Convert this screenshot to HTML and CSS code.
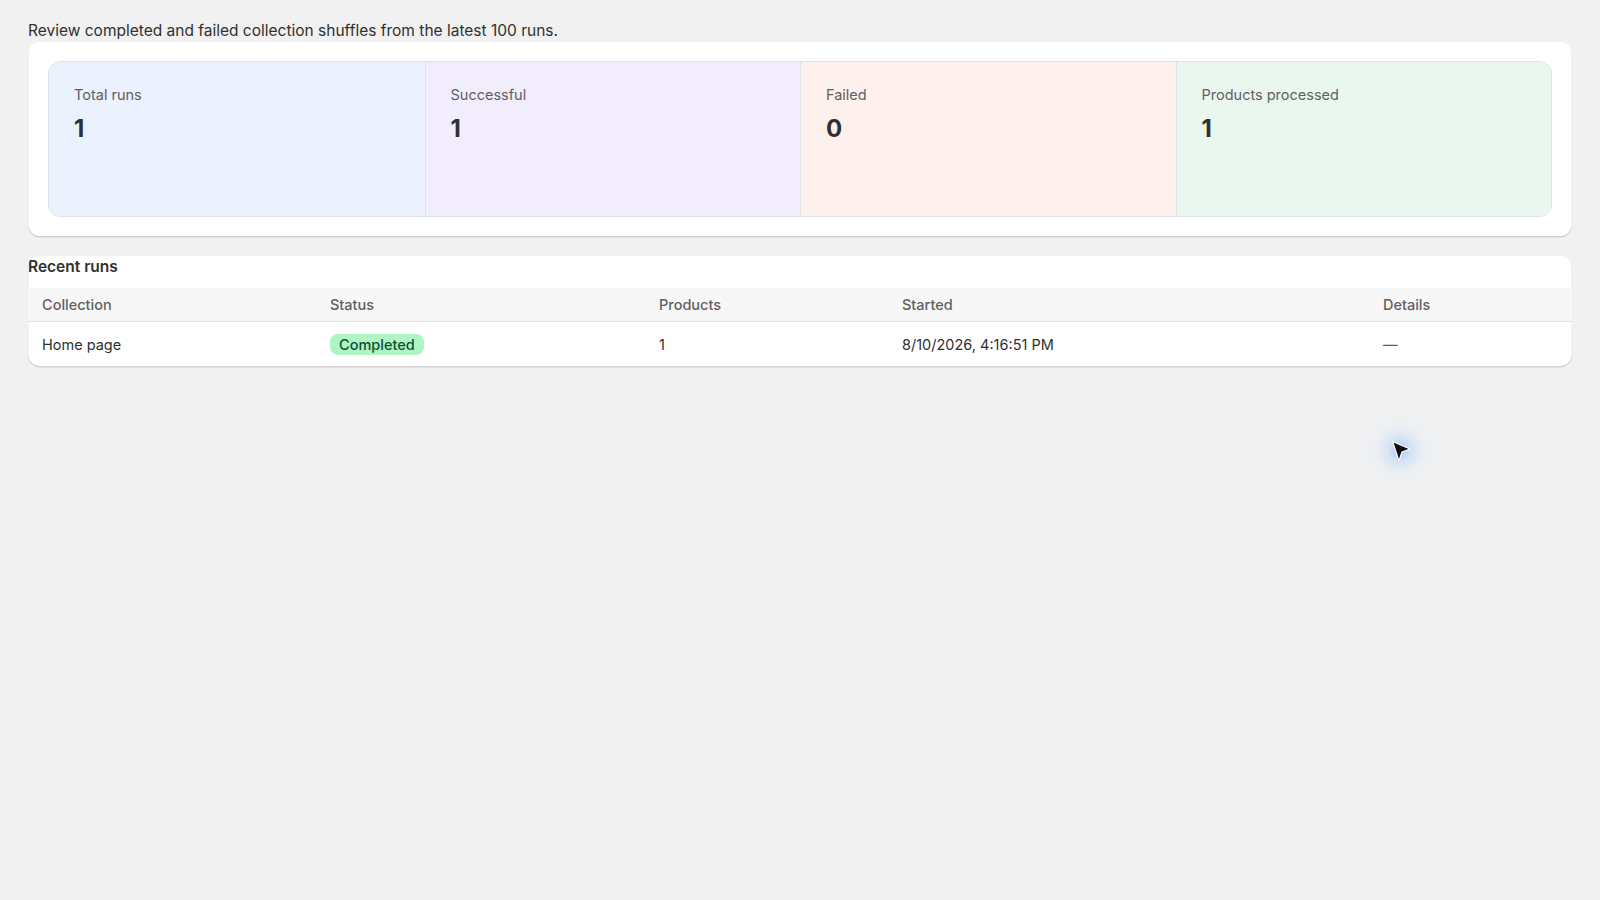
FILE: index.html
```html
<!DOCTYPE html>
<html lang="en">

<head>
  <meta charset="UTF-8">
  <title>Shuffle history</title>
  <link rel="stylesheet" href="styles.css">
</head>

<body>
  <div class="page">
    <p class="intro">Review completed and failed collection shuffles from the latest 100 runs.</p>

    <div class="card stats-card">
      <div class="stats">
        <div class="stat stat-blue">
          <div class="stat-label">Total runs</div>
          <div class="stat-value">1</div>
        </div>
        <div class="stat stat-purple">
          <div class="stat-label">Successful</div>
          <div class="stat-value">1</div>
        </div>
        <div class="stat stat-red">
          <div class="stat-label">Failed</div>
          <div class="stat-value">0</div>
        </div>
        <div class="stat stat-green">
          <div class="stat-label">Products processed</div>
          <div class="stat-value">1</div>
        </div>
      </div>
    </div>

    <div class="card runs-card">
      <h2 class="runs-title">Recent runs</h2>
      <table class="runs">
        <colgroup>
          <col class="col-collection">
          <col class="col-status">
          <col class="col-products">
          <col class="col-started">
          <col class="col-details">
        </colgroup>
        <thead>
          <tr>
            <th>Collection</th>
            <th>Status</th>
            <th>Products</th>
            <th>Started</th>
            <th>Details</th>
          </tr>
        </thead>
        <tbody>
          <tr>
            <td>Home page</td>
            <td><span class="badge badge-success">Completed</span></td>
            <td>1</td>
            <td>8/10/2026, 4:16:51 PM</td>
            <td class="muted">—</td>
          </tr>
        </tbody>
      </table>
    </div>
  </div>

  <!-- pointer left in the recording -->
  <div class="cursor">
    <svg width="24" height="24" viewBox="0 0 24 24">
      <path d="M1.5 3.5 L19 11 L11 14 L8 23 Z" fill="#111" stroke="#fff" stroke-width="1.2" stroke-linejoin="round"/>
    </svg>
  </div>
</body>

</html>
```

FILE: styles.css
```css
* {
  padding: 0;
  margin: 0;
  box-sizing: border-box;
}

body {
  position: relative;
  min-height: 900px;
  background: #f1f1f1;
  font-family: Inter, "Noto Sans", "Liberation Sans", sans-serif;
  font-size: 14.5px;
  line-height: 20px;
  color: #303030;
}

.page {
  padding: 21px 28px;
}

.intro {
  font-size: 15.5px;
  color: #303030;
}

.card {
  background: #ffffff;
  border-radius: 12px;
  box-shadow: 0 1px 0 rgba(26, 26, 26, .07),
    inset 0 -1px 0 rgba(0, 0, 0, .14),
    inset 0 0 0 1px rgba(0, 0, 0, .05);
}

.stats-card {
  padding: 20px;
}

.stats {
  display: grid;
  grid-template-columns: repeat(4, 1fr);
  border: 1px solid #dde2e9;
  border-radius: 12px;
  overflow: hidden;
}

.stat {
  min-height: 154px;
  padding: 23px 25px;
  border-left: 1px solid #dde1e8;
}

.stat:first-child {
  border-left: none;
}

.stat-blue {
  background: #ebf2fe;
}

.stat-purple {
  background: #f1edfd;
}

.stat-red {
  background: #fef0ec;
}

.stat-green {
  background: #eaf7ee;
}

.stat-label {
  color: #616161;
}

.stat-value {
  margin-top: 8px;
  font-size: 24px;
  line-height: 32px;
  font-weight: 700;
  color: #303030;
}

.runs-card {
  margin-top: 18px;
  overflow: hidden;
}

.runs-title {
  font-size: 15.5px;
  line-height: 24px;
  font-weight: 600;
  padding-bottom: 9px;
  color: #303030;
}

.runs {
  width: 100%;
  table-layout: fixed;
  border-collapse: collapse;
}

.col-collection {
  width: 288px;
}

.col-status {
  width: 329px;
}

.col-products {
  width: 243px;
}

.col-started {
  width: 481px;
}

.col-details {
  width: 203px;
}

.runs th {
  text-align: left;
  font-weight: 500;
  color: #616161;
  background: #f7f7f7;
  padding: 7px 14px 6px;
  border-bottom: 1px solid #e3e3e3;
}

.runs td {
  padding: 12px 14px 12px;
  vertical-align: middle;
}

.muted {
  color: #616161;
}

.badge {
  display: inline-block;
  height: 21px;
  padding: 0 9px;
  border-radius: 8px;
  font-size: 14.5px;
  line-height: 21px;
  font-weight: 500;
}

.badge-success {
  background: #aef4c4;
  color: #0c5132;
}

/* 录屏里留下的鼠标指针 */
.cursor {
  position: absolute;
  left: 1340px;
  top: 390px;
  width: 120px;
  height: 120px;
  border-radius: 50%;
  background: radial-gradient(circle at 50% 50%, rgba(90, 160, 255, .5) 0, rgba(120, 180, 255, .22) 14%, rgba(200, 225, 255, .14) 28%, rgba(225, 236, 250, .08) 44%, rgba(241, 241, 241, 0) 62%);
  display: flex;
  align-items: center;
  justify-content: center;
}

.cursor svg {
  margin: 0 0 0 6px;
}
```
